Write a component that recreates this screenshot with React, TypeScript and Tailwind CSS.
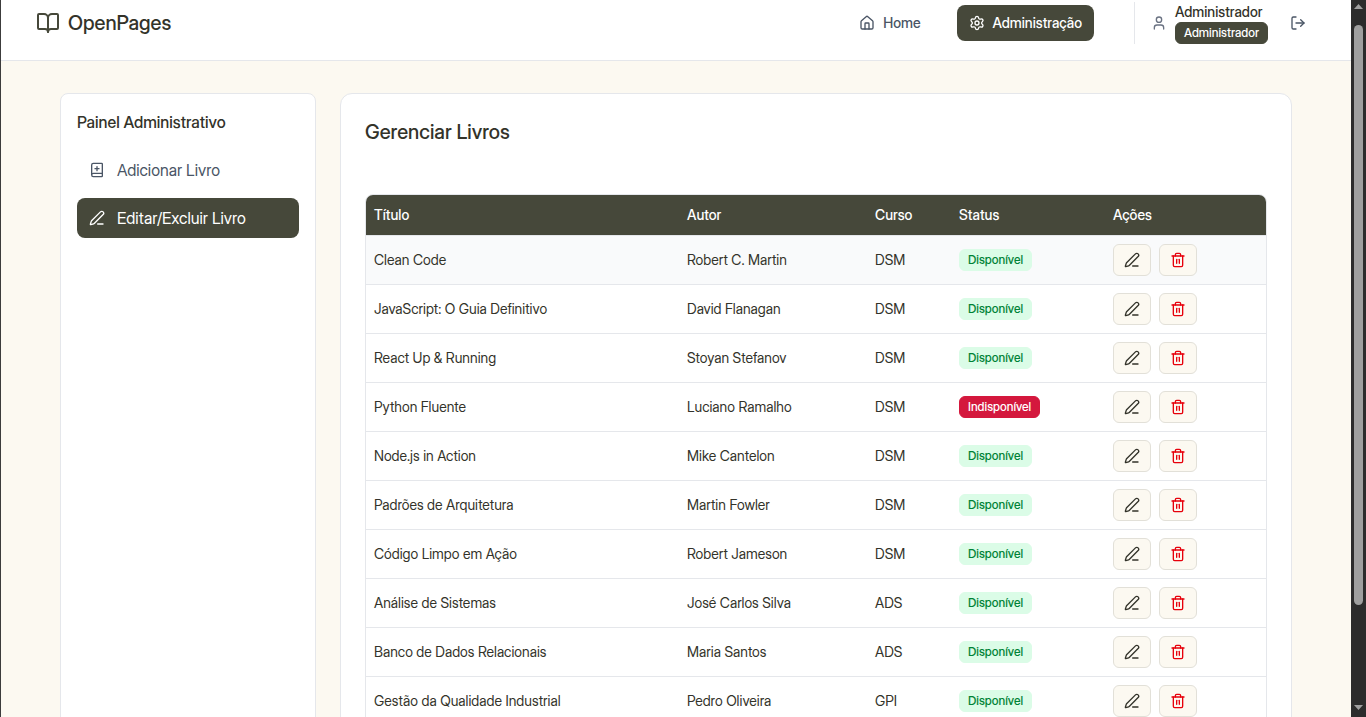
import { BookOpen, House, LogOut, PenLine, Settings, Trash2, User } from 'lucide-react';

type Book = { title: string; author: string; course: string; available: boolean };

const books: Book[] = [
  { title: 'Clean Code', author: 'Robert C. Martin', course: 'DSM', available: true },
  { title: 'JavaScript: O Guia Definitivo', author: 'David Flanagan', course: 'DSM', available: true },
  { title: 'React Up & Running', author: 'Stoyan Stefanov', course: 'DSM', available: true },
  { title: 'Python Fluente', author: 'Luciano Ramalho', course: 'DSM', available: false },
  { title: 'Node.js in Action', author: 'Mike Cantelon', course: 'DSM', available: true },
  { title: 'Padrões de Arquitetura', author: 'Martin Fowler', course: 'DSM', available: true },
  { title: 'Código Limpo em Ação', author: 'Robert Jameson', course: 'DSM', available: true },
  { title: 'Análise de Sistemas', author: 'José Carlos Silva', course: 'ADS', available: true },
  { title: 'Banco de Dados Relacionais', author: 'Maria Santos', course: 'ADS', available: true },
  { title: 'Gestão da Qualidade Industrial', author: 'Pedro Oliveira', course: 'GPI', available: true },
];

function BookPlusIcon() {
  return (
    <svg className="size-4 shrink-0" viewBox="0 0 24 24" fill="none" stroke="currentColor" strokeWidth="2" strokeLinecap="round" strokeLinejoin="round" aria-hidden="true">
      <path d="M12 7v6" />
      <path d="M4 19.5v-15A2.5 2.5 0 0 1 6.500 2H19a1 1 0 0 1 1 1v18a1 1 0 0 1-1 1H6.500a1 1 0 0 1 0-5H20" />
      <path d="M9 10h6" />
    </svg>
  );
}

function Header() {
  return (
    <header className="shrink-0 border-b border-gray-200 bg-white pt-0.5 pb-4">
      <div className="mx-auto flex max-w-7xl items-center justify-between">
        <a href="#" className="flex items-center gap-2 text-xl font-medium text-[#33332a]">
          <BookOpen className="size-6 text-[#46483a]" />
          OpenPages
        </a>
        <nav className="flex items-center">
          <a href="#" className="mr-6 flex h-9 items-center gap-2 px-3 text-sm font-medium text-gray-600">
            <House className="size-4" />
            Home
          </a>
          <a href="#" className="flex h-9 items-center gap-2 rounded-lg bg-[#46483a] px-3 text-sm font-medium text-white">
            <Settings className="size-4" />
            Administração
          </a>
          <div className="ml-10 flex items-center border-l border-gray-200 pl-4">
            <User className="mr-2 size-4 text-gray-500" />
            <div className="flex flex-col items-start text-sm font-medium text-[#33332a]">
              <span>Administrador</span>
              <span className="rounded-md border border-[#46483a] bg-[#46483a] px-2 py-0.5 text-xs text-white">
                Administrador
              </span>
            </div>
            <button type="button" aria-label="Sair" className="ml-3 flex h-8 items-center px-2.5 text-gray-600">
              <LogOut className="size-4" />
            </button>
          </div>
        </nav>
      </div>
    </header>
  );
}

function Sidebar() {
  return (
    <aside className="w-64 shrink-0 rounded-lg border border-gray-200 bg-white p-4">
      <h2 className="mb-4 text-base font-medium text-[#33332a]">Painel Administrativo</h2>
      <div className="flex flex-col gap-2">
        <button type="button" className="flex h-10 items-center gap-3 rounded-lg px-3 text-gray-600">
          <BookPlusIcon />
          Adicionar Livro
        </button>
        <button type="button" className="flex h-10 items-center gap-3 rounded-lg bg-[#46483a] px-3 text-white">
          <PenLine className="size-4" />
          Editar/Excluir Livro
        </button>
      </div>
    </aside>
  );
}

function BookRow({ book }: { book: Book }) {
  return (
    <tr className="border-b border-gray-200 first:bg-gray-50">
      <td className="p-2">{book.title}</td>
      <td className="p-2">{book.author}</td>
      <td className="p-2">{book.course}</td>
      <td className="p-2">
        {book.available ? (
          <span className="inline-flex rounded-md border border-green-100 bg-green-100 px-2 py-0.5 text-xs font-medium text-green-700">
            Disponível
          </span>
        ) : (
          <span className="inline-flex rounded-md border border-[#d4183d] bg-[#d4183d] px-2 py-0.5 text-xs font-medium text-white">
            Indisponível
          </span>
        )}
      </td>
      <td className="p-2">
        <div className="flex gap-2">
          <button type="button" aria-label={`Editar ${book.title}`} className="flex h-8 items-center rounded-md border border-[#e2e0d8] bg-[#fcf9f1] px-2.5 text-[#33332a]">
            <PenLine className="size-4" />
          </button>
          <button type="button" aria-label={`Excluir ${book.title}`} className="flex h-8 items-center rounded-md border border-[#e2e0d8] bg-[#fcf9f1] px-2.5 text-red-600">
            <Trash2 className="size-4" />
          </button>
        </div>
      </td>
    </tr>
  );
}

function BooksPanel() {
  return (
    <main className="min-w-0 flex-1 self-start rounded-xl border border-gray-200 bg-white p-6">
      <h1 className="mb-12 text-xl font-medium text-[#33332a]">Gerenciar Livros</h1>
      <div className="overflow-hidden rounded-lg border border-gray-200">
        <table className="w-full table-fixed text-left text-sm text-[#33332a]">
          <colgroup>
            <col className="w-[313px]" />
            <col className="w-[188px]" />
            <col className="w-[84px]" />
            <col className="w-[154px]" />
            <col className="w-[161px]" />
          </colgroup>
          <thead>
            <tr className="h-10 border-b border-gray-200 bg-[#46483a] text-white">
              <th className="px-2 font-medium">Título</th>
              <th className="px-2 font-medium">Autor</th>
              <th className="px-2 font-medium">Curso</th>
              <th className="px-2 font-medium">Status</th>
              <th className="px-2 font-medium">Ações</th>
            </tr>
          </thead>
          <tbody>
            {books.map((book) => (
              <BookRow key={book.title} book={book} />
            ))}
          </tbody>
        </table>
      </div>
    </main>
  );
}

function ScrollTrack() {
  return (
    <div className="flex w-[15px] shrink-0 flex-col items-center bg-[#2c2c2c] text-[#9f9f9f]" aria-hidden="true">
      <svg className="mt-1 mb-4 h-[5px] w-[9px] shrink-0" viewBox="0 0 9 5" fill="currentColor">
        <path d="M4.500 0 9 5H0Z" />
      </svg>
      <div className="w-[9px] grow-[580] rounded-full bg-[#9f9f9f]" />
      <div className="grow-[100]" />
      <svg className="mb-[7px] h-[5px] w-[9px] shrink-0" viewBox="0 0 9 5" fill="currentColor">
        <path d="M0 0h9L4.500 5Z" />
      </svg>
    </div>
  );
}

export default function App() {
  return (
    <div className="flex h-screen overflow-hidden border-l border-[#3c3c3c] font-['Inter_Display','Inter',sans-serif] [font-variation-settings:'opsz'_32]">
      <div className="flex min-w-0 flex-1 flex-col overflow-hidden bg-[#fcf9f1]">
        <Header />
        <div className="mx-auto flex w-full max-w-7xl gap-6 px-6 py-8">
          <Sidebar />
          <BooksPanel />
        </div>
      </div>
      <ScrollTrack />
    </div>
  );
}
